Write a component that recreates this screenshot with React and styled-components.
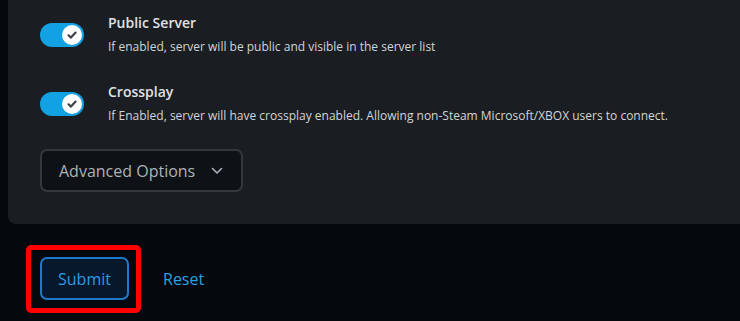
import React from "react"
import styled, { createGlobalStyle } from "styled-components"

const GlobalStyle = createGlobalStyle`
  html, body {
    margin: 0;
    padding: 0;
    background: #05080c;
    font-family: "Open Sans", "Noto Sans", sans-serif;
  }
`

const Page = styled.div`
  width: 740px;
  height: 321px;
  overflow: hidden;
  background: #05080c;
`

const Card = styled.section`
  margin-left: 8px;
  padding: 13px 0 32px 32px;
  background: #1a1d21;
  border-radius: 0 0 0 8px;
`

const SettingRow = styled.div`
  display: flex;
  align-items: flex-start;
  margin-bottom: ${(p) => p.gap || 0}px;
`

const Toggle = styled.div`
  position: relative;
  flex: 0 0 44px;
  width: 44px;
  height: 24px;
  margin-top: 10px;
  margin-right: 24px;
  border-radius: 12px;
  background: ${(p) => (p.on ? "#12a1e3" : "#3a3f45")};

  .knob {
    position: absolute;
    top: 2px;
    left: ${(p) => (p.on ? "22px" : "2px")};
    width: 20px;
    height: 20px;
    border-radius: 50%;
    background: #ffffff;
    display: flex;
    align-items: center;
    justify-content: center;
  }
`

const Text = styled.div`
  display: flex;
  flex-direction: column;

  h3 {
    margin: 0;
    font-size: 14px;
    line-height: 20px;
    font-weight: 600;
    color: #e0e2e4;
  }

  p {
    margin: 5px 0 0;
    font-size: 12px;
    line-height: 17px;
    color: #d2d5d8;
  }
`

const Dropdown = styled.button`
  display: inline-flex;
  align-items: center;
  gap: 16px;
  height: 43px;
  padding: 0 18px 0 17px;
  font-family: inherit;
  font-size: 16px;
  color: #aeb3b9;
  background: #0e1115;
  border: 2px solid #34383d;
  border-radius: 7px;
`

const Actions = styled.div`
  display: flex;
  align-items: center;
  gap: 22px;
  padding: 21px 0 0 26px;
`

const Highlight = styled.div`
  padding: 7px 7px 8px 9px;
  border: 5px solid #ff0000;
  border-radius: 5px;
`

const SubmitButton = styled.button`
  display: block;
  width: 89px;
  height: 43px;
  font-family: inherit;
  font-size: 16px;
  color: #2d9be0;
  background: #07182a;
  border: 2px solid #1e78cc;
  border-radius: 7px;
`

const LinkButton = styled.button`
  padding: 0;
  font-family: inherit;
  font-size: 16px;
  color: #27a2e2;
  background: none;
  border: 0;
`

const Check = () => (
  <svg width="12" height="12" viewBox="0 0 12 12">
    <path d="M2.5 6.3 L5 8.6 L9.6 3.6" fill="none" stroke="#3d4248" strokeWidth="2.2" strokeLinecap="round" strokeLinejoin="round" />
  </svg>
)

const settings = [
  {
    title: "Public Server",
    text: "If enabled, server will be public and visible in the server list",
    gap: 27,
  },
  {
    title: "Crossplay",
    text: "If Enabled, server will have crossplay enabled. Allowing non-Steam Microsoft/XBOX users to connect.",
    gap: 25,
  },
]

const App = () => (
  <Page>
    <GlobalStyle />
    <Card>
      {settings.map((s) => (
        <SettingRow key={s.title} gap={s.gap}>
          <Toggle on>
            <span className="knob">
              <Check />
            </span>
          </Toggle>
          <Text>
            <h3>{s.title}</h3>
            <p>{s.text}</p>
          </Text>
        </SettingRow>
      ))}
      <Dropdown>
        Advanced Options
        <svg width="12" height="8" viewBox="0 0 12 8">
          <path d="M1.5 1.5 L6 6 L10.5 1.5" fill="none" stroke="#aeb3b9" strokeWidth="1.6" strokeLinecap="round" strokeLinejoin="round" />
        </svg>
      </Dropdown>
    </Card>
    <Actions>
      <Highlight>
        <SubmitButton>Submit</SubmitButton>
      </Highlight>
      <LinkButton>Reset</LinkButton>
    </Actions>
  </Page>
)

export default App
